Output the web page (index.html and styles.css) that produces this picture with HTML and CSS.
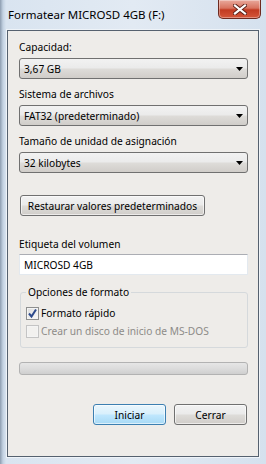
FILE: index.html
```html
<!DOCTYPE html>
<html lang="es">
<head>
  <meta charset="UTF-8">
  <meta name="viewport" content="width=device-width, initial-scale=1.0">
  <title>Formatear MICROSD 4GB (F:)</title>
  <link rel="stylesheet" href="styles.css">
</head>
<body>
  <div class="window">
    <div class="titlebar">
      <span class="title">Formatear MICROSD 4GB (F:)</span>
      <button class="close-btn" type="button" aria-label="Cerrar">
        <svg width="14" height="11" viewBox="0 0 14 11">
          <path d="M2 1.5 L12 9.5 M12 1.5 L2 9.5" stroke="#5a2018" stroke-width="4" stroke-linecap="square"/>
          <path d="M2 1.5 L12 9.5 M12 1.5 L2 9.5" stroke="#ffffff" stroke-width="2.2" stroke-linecap="square"/>
        </svg>
      </button>
    </div>

    <div class="client">
      <div class="form-group">
        <label>Capacidad:</label>
        <div class="combo">
          <span>3,67 GB</span>
          <svg class="arrow" width="7" height="4" viewBox="0 0 7 4"><path d="M0 0 H7 L3.5 4 Z" fill="#000"/></svg>
        </div>
      </div>

      <div class="form-group">
        <label>Sistema de archivos</label>
        <div class="combo">
          <span>FAT32 (predeterminado)</span>
          <svg class="arrow" width="7" height="4" viewBox="0 0 7 4"><path d="M0 0 H7 L3.5 4 Z" fill="#000"/></svg>
        </div>
      </div>

      <div class="form-group">
        <label>Tamaño de unidad de asignación</label>
        <div class="combo">
          <span>32 kilobytes</span>
          <svg class="arrow" width="7" height="4" viewBox="0 0 7 4"><path d="M0 0 H7 L3.5 4 Z" fill="#000"/></svg>
        </div>
      </div>

      <button class="btn btn-restore" type="button">Restaurar valores predeterminados</button>

      <div class="form-group volume-group">
        <label for="volume">Etiqueta del volumen</label>
        <input type="text" id="volume" value="MICROSD 4GB">
      </div>

      <fieldset class="options">
        <legend>Opciones de formato</legend>
        <div class="check-row">
          <span class="checkbox checked">
            <svg width="11" height="11" viewBox="0 0 11 11"><path d="M2 5.5 L4.5 8.5 L9 1.5" fill="none" stroke="#2d4a8c" stroke-width="2"/></svg>
          </span>
          <span>Formato rápido</span>
        </div>
        <div class="check-row disabled">
          <span class="checkbox"></span>
          <span>Crear un disco de inicio de MS-DOS</span>
        </div>
      </fieldset>

      <div class="progress"></div>

      <div class="actions">
        <button class="btn btn-default" type="button">Iniciar</button>
        <button class="btn" type="button">Cerrar</button>
      </div>
    </div>
  </div>
</body>
</html>
```

FILE: styles.css
```css
* {
  box-sizing: border-box;
}

body {
  margin: 0;
  font-family: "Noto Sans", "Open Sans", sans-serif;
  font-size: 10.2px;
  color: #000;
  background-color: #cfdcea;
}

.window {
  width: 266px;
  height: 464px;
  display: flex;
  flex-direction: column;
  background: linear-gradient(90deg, #8d9db0 0px, #c3d2e2 3px, #d9e4f0 6px, #e2eaf3 50%, #d5e1ee 100%);
}

.titlebar {
  height: 30px;
  display: flex;
  align-items: flex-start;
  justify-content: space-between;
  padding-left: 8px;
  padding-right: 5px;
}

.title {
  margin-top: 7px;
  font-size: 11.5px;
  line-height: 16px;
}

.close-btn {
  width: 43px;
  height: 19px;
  border: 1px solid #6d2a20;
  border-top: none;
  border-radius: 0 0 5px 5px;
  background: linear-gradient(#e9a99c 0%, #d8735f 45%, #c23b22 55%, #d4563a 100%);
  display: flex;
  align-items: center;
  justify-content: center;
  padding: 0;
  box-shadow: inset 0 0 0 1px rgba(255, 255, 255, 0.35);
}

.client {
  flex: 1;
  margin: 0 7px 7px 7px;
  border: 1px solid #55616f;
  outline: 1px solid #eef3f8;
  background-color: #eeece9;
  padding: 9px 10px 0 11px;
}

.form-group {
  margin-bottom: 8px;
}

.form-group label {
  display: block;
  line-height: 15px;
  margin-bottom: 3px;
}

.combo {
  height: 21px;
  display: flex;
  align-items: center;
  justify-content: space-between;
  padding: 0 4px 0 4px;
  border: 1px solid #707070;
  border-radius: 3px;
  background: linear-gradient(#f2f2f2 0%, #ebebeb 45%, #dddbd8 55%, #d0cdc9 100%);
}

.btn {
  height: 21px;
  padding: 0 6px;
  font: inherit;
  color: #000;
  white-space: nowrap;
  border: 1px solid #707070;
  border-radius: 3px;
  background: linear-gradient(#f2f2f2 0%, #ebebeb 45%, #dddbd8 55%, #d0cdc9 100%);
  box-shadow: inset 0 0 0 1px rgba(255, 255, 255, 0.6);
}

.btn-restore {
  display: block;
  width: 185px;
  margin: 22px 0 21px 1px;
}

.volume-group label {
  margin-bottom: 2px;
}

.volume-group input {
  width: 100%;
  height: 21px;
  padding: 0 4px;
  font: inherit;
  color: #000;
  background-color: #fff;
  border: 1px solid #e3e9ef;
  border-top-color: #abadb3;
  outline: none;
}

.options {
  margin: 10px 0 0 1px;
  padding: 4px 5px 7px 5px;
  border: 1px solid #d5d9dc;
  border-radius: 3px;
}

.options legend {
  padding: 0 2px;
  line-height: 15px;
}

.check-row {
  height: 18px;
  display: flex;
  align-items: center;
  gap: 2px;
}

.check-row.disabled {
  color: #8d8b88;
}

.checkbox {
  width: 13px;
  height: 13px;
  display: flex;
  align-items: center;
  justify-content: center;
  border: 1px solid #8e8f8f;
  background: linear-gradient(135deg, #dcdcdc, #fbfbfb);
  box-shadow: inset 0 0 0 1px #f4f4f4;
}

.check-row.disabled .checkbox {
  border-color: #c4c4c4;
  background: #f2f1ef;
}

.progress {
  height: 13px;
  margin-top: 14px;
  border: 1px solid #b2b2b2;
  border-radius: 3px;
  background: linear-gradient(#e6e6e6 0%, #dcdcdc 50%, #cfcfcf 100%);
}

.actions {
  display: flex;
  justify-content: flex-end;
  gap: 8px;
  margin-top: 29px;
  padding-right: 1px;
}

.actions .btn {
  width: 73px;
  height: 21px;
}

.btn-default {
  border-color: #3c7fb1;
  background: linear-gradient(#eaf6fd 0%, #d9f0fc 45%, #bee6fd 55%, #a7d9f5 100%);
}
```
